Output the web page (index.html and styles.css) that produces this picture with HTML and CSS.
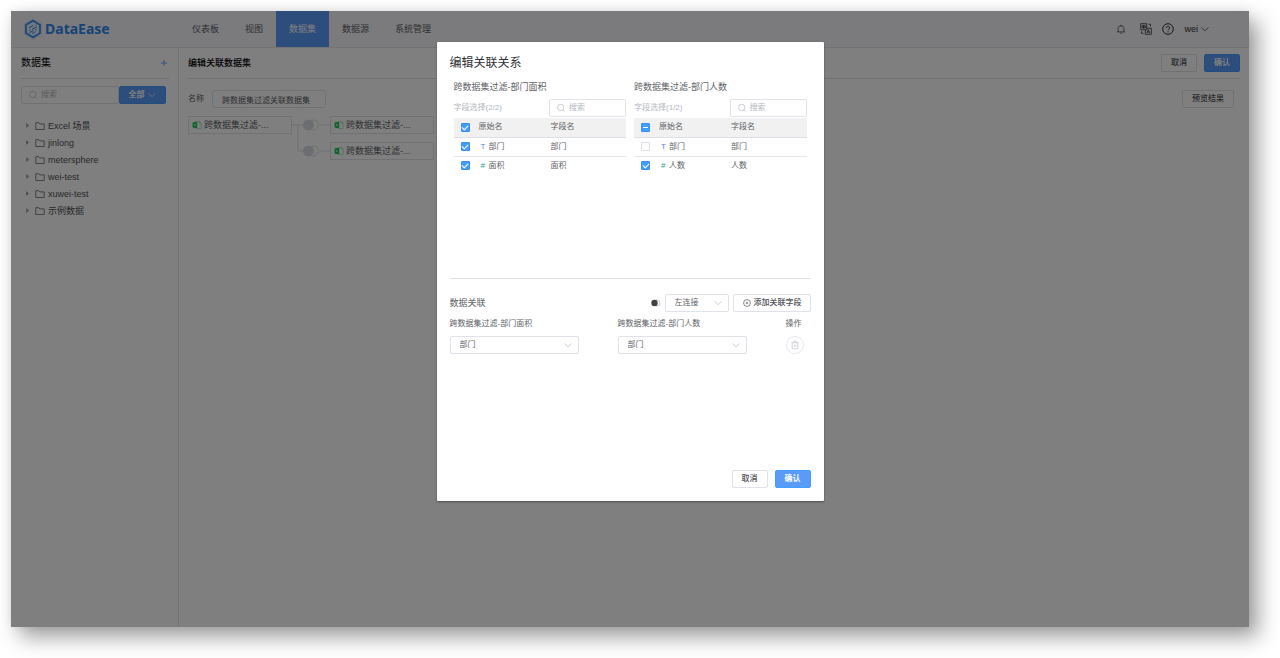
FILE: index.html
```html
<!DOCTYPE html>
<html lang="zh-CN">
<head>
<meta charset="utf-8">
<title>DataEase</title>
<link rel="stylesheet" href="styles.css">
</head>
<body>
<svg class="sprite" aria-hidden="true">
  <symbol id="search" viewBox="0 0 10 10"><circle cx="4.7" cy="4.5" r="3.2"/><path d="M7 6.9 8.6 8.5"/></symbol>
  <symbol id="down" viewBox="0 0 10 10"><path d="M1.5 3.3 5 6.8 8.500 3.3"/></symbol>
  <symbol id="folder" viewBox="0 0 10 10"><path d="M.8 1.700h3l1 1.200h4.400v5.600H.8z"/></symbol>
  <symbol id="caret" viewBox="0 0 10 10"><path d="M2 0 8.500 5 2 10z"/></symbol>
  <symbol id="excel" viewBox="0 0 10 10"><path class="excel-back" d="M5 1.500h2.500L9.200 3v5.500H5M7.300 1.200V3.200h2"/><path class="excel-front" d="M.6 2.400 5.200 1.500v7L.6 7.600z"/><path class="excel-mark" d="m2.200 3.800 1.500 2.400M3.700 3.800 2.200 6.200"/></symbol>
</svg>
<div class="app">
  <header class="topbar">
    <a class="brand" href="#">
      <svg class="brand-icon" viewBox="0 0 20 22"><path class="brand-halo" d="M10 .5 19 5.700v10.600L10 21.500 1 16.300V5.700z"/><path class="brand-hex" d="M10 2.800 17 6.900v8.200L10 19.200 3 15.100V6.900z"/><path class="brand-lines" d="m6 9.800 4.300-2.300M12.500 7.300l1.200-.6M6 12.600l1.500-.8M9 11.400l4.800-2.600M6.500 14.700l4-2.100M12.300 12l1.400-.8M9 15.600l3.500-1.900"/></svg>
      <span>DataEase</span>
    </a>
    <nav class="tabs">
      <a href="#">仪表板</a><a href="#">视图</a><a class="active" href="#">数据集</a><a href="#">数据源</a><a href="#">系统管理</a>
    </nav>
    <div class="tools">
      <svg class="tool bell" viewBox="0 0 12 12"><path d="M2.500 9.500V4.500L4 2.500h4l1.500 2v5M1.200 9.500h9.600M6 1v1.500M5 11h2"/></svg>
      <svg class="tool" viewBox="0 0 12 12"><path d="M.7.700h6v6h-6zM3.700 1.800v4M2 2.800h3.400v1.700H2zM6.700 5.300h4.600v6h-6V6.700M7 10l1.300-3.300L9.600 10M7.500 9h1.700M8.500 1.200h2V3.500M1.500 8.300v2h2"/></svg>
      <svg class="tool help" viewBox="0 0 12 12"><circle cx="6" cy="6" r="5.300"/><path d="M4.400 4.800a1.600 1.600 0 1 1 2.400 1.400Q6 6.600 6 7.300M6 8.300v1"/></svg>
      <button class="user" type="button">wei <svg class="icon"><use href="#down"/></svg></button>
    </div>
  </header>
  <div class="body">
    <aside class="sidebar">
      <div class="side-head"><h2>数据集</h2><button class="plus" type="button" aria-label="新增"><svg viewBox="0 0 8 8"><path d="M4 1v6M1 4h6"/></svg></button></div>
      <div class="side-filter">
        <label class="search"><svg class="icon"><use href="#search"/></svg><input type="text" placeholder="搜索" aria-label="搜索"></label>
        <button class="btn primary all" type="button">全部 <svg class="icon"><use href="#down"/></svg></button>
      </div>
      <ul class="tree">
        <li><svg class="caret"><use href="#caret"/></svg><svg class="folder"><use href="#folder"/></svg>Excel 场景</li>
        <li><svg class="caret"><use href="#caret"/></svg><svg class="folder"><use href="#folder"/></svg>jinlong</li>
        <li><svg class="caret"><use href="#caret"/></svg><svg class="folder"><use href="#folder"/></svg>metersphere</li>
        <li><svg class="caret"><use href="#caret"/></svg><svg class="folder"><use href="#folder"/></svg>wei-test</li>
        <li><svg class="caret"><use href="#caret"/></svg><svg class="folder"><use href="#folder"/></svg>xuwei-test</li>
        <li><svg class="caret"><use href="#caret"/></svg><svg class="folder"><use href="#folder"/></svg>示例数据</li>
      </ul>
    </aside>
    <main class="main">
      <div class="main-head"><h1>编辑关联数据集</h1><div class="actions"><button class="btn" type="button">取消</button><button class="btn primary" type="button">确认</button></div></div>
      <div class="name-row">
        <label for="name">名称</label><input id="name" type="text" value="跨数据集过滤关联数据集">
        <button class="btn preview" type="button">预览结果</button>
      </div>
      <div class="graph">
        <div class="node"><svg class="icon excel"><use href="#excel"/></svg>跨数据集过滤-...</div>
        <svg class="links" viewBox="0 0 38 44"><path d="M0 9h12M28 9h10M6 9v26h6M28 35h10"/><circle class="ring" cx="21.500" cy="9" r="5"/><circle class="ring" cx="21.500" cy="35" r="5"/><circle class="dot" cx="16.500" cy="9" r="5.500"/><circle class="dot" cx="16.500" cy="35" r="5.500"/></svg>
        <div class="children">
          <div class="node"><svg class="icon excel"><use href="#excel"/></svg>跨数据集过滤-...</div>
          <div class="node"><svg class="icon excel"><use href="#excel"/></svg>跨数据集过滤-...</div>
        </div>
      </div>
    </main>
  </div>
  <div class="overlay">
    <section class="dialog" role="dialog" aria-labelledby="dialog-title">
      <h2 id="dialog-title">编辑关联关系</h2>
      <div class="fields">
        <div class="field-panel">
          <h3>跨数据集过滤-部门面积</h3>
          <div class="field-bar"><span>字段选择(2/2)</span><label class="search"><svg class="icon"><use href="#search"/></svg><input type="text" placeholder="搜索" aria-label="搜索字段"></label></div>
          <table>
            <thead><tr><th class="pick"><input type="checkbox" checked aria-label="全选"></th><th class="origin">原始名</th><th>字段名</th></tr></thead>
            <tbody>
              <tr><td class="pick"><input type="checkbox" checked aria-label="部门"></td><td><span class="type text">T</span>部门</td><td>部门</td></tr>
              <tr><td class="pick"><input type="checkbox" checked aria-label="面积"></td><td><span class="type number">#</span>面积</td><td>面积</td></tr>
            </tbody>
          </table>
        </div>
        <div class="field-panel">
          <h3>跨数据集过滤-部门人数</h3>
          <div class="field-bar"><span>字段选择(1/2)</span><label class="search"><svg class="icon"><use href="#search"/></svg><input type="text" placeholder="搜索" aria-label="搜索字段"></label></div>
          <table>
            <thead><tr><th class="pick"><input class="partial" type="checkbox" aria-label="全选"></th><th class="origin">原始名</th><th>字段名</th></tr></thead>
            <tbody>
              <tr><td class="pick"><input type="checkbox" aria-label="部门"></td><td><span class="type text">T</span>部门</td><td>部门</td></tr>
              <tr><td class="pick"><input type="checkbox" checked aria-label="人数"></td><td><span class="type number">#</span>人数</td><td>人数</td></tr>
            </tbody>
          </table>
        </div>
      </div>
      <div class="join-head">
        <h3>数据关联</h3>
        <svg class="join-icon" viewBox="0 0 10 8"><circle class="join-right" cx="6" cy="4" r="3"/><circle class="join-left" cx="3.500" cy="4" r="3.200"/></svg>
        <div class="select join-type"><select aria-label="连接方式"><option>左连接</option></select><svg class="icon"><use href="#down"/></svg></div>
        <button class="btn add" type="button"><svg class="icon" viewBox="0 0 10 10"><circle cx="5" cy="5" r="3.400"/><path d="M5 3.800v2.400M3.800 5h2.400"/></svg>添加关联字段</button>
      </div>
      <div class="join-grid">
        <label for="left-field">跨数据集过滤-部门面积</label><label for="right-field">跨数据集过滤-部门人数</label><span>操作</span>
        <div class="select"><select id="left-field"><option>部门</option></select><svg class="icon"><use href="#down"/></svg></div>
        <div class="select"><select id="right-field"><option>部门</option></select><svg class="icon"><use href="#down"/></svg></div>
        <button class="trash" type="button" aria-label="删除" disabled><svg class="icon" viewBox="0 0 10 10"><path d="M1.300 2.700h7.400M3.700 2.500V1.300h2.600v1.200M2.200 2.700v6h5.600v-6M4.200 4.500v2.500M5.800 4.500v2.500"/></svg></button>
      </div>
      <div class="dialog-foot"><button class="btn" type="button">取消</button><button class="btn primary" type="button">确认</button></div>
    </section>
  </div>
</div>
</body>
</html>
```
FILE: styles.css
```css
* { box-sizing: border-box; }
body {
  margin: 0;
  min-height: 100vh;
  padding: 11px 31px 31px 11px;
  display: flex;
  background: #fff;
  color: #606266;
  font: 8px/12px "Liberation Sans", "Noto Sans CJK SC", sans-serif;
}
h1, h2, h3, ul { margin: 0; padding: 0; font-weight: 400; list-style: none; }
a { color: inherit; text-decoration: none; }
button, input, select { font: inherit; color: inherit; margin: 0; }
svg { fill: none; stroke: currentColor; flex: none; }
.sprite { display: none; }
.icon { width: 10px; height: 10px; stroke-width: 0.7; }

.app {
  position: relative;
  flex: 1;
  display: flex;
  flex-direction: column;
  background: #fff;
  box-shadow: 9px 10px 20px rgba(0, 0, 0, 0.38), 0 0 10px rgba(0, 0, 0, 0.08);
}
.topbar {
  display: flex;
  height: 37px;
  background: #f6f6fb;
  border-bottom: 1px solid #e6e6e6;
}
.brand {
  width: 168px;
  padding-left: 12px;
  display: flex;
  align-items: center;
  gap: 2px;
  color: #2f86f2;
  font: 700 14px/20px "Noto Sans", sans-serif;
}
.brand-icon { width: 20px; height: 22px; }
.brand-halo { fill: #cfe0f7; stroke: none; }
.brand-hex { fill: #e9f1fc; stroke-width: 1.6; }
.brand-lines { stroke-width: 1; }
.tabs { display: flex; font-size: 9px; }
.tabs a { display: flex; align-items: center; padding: 0 13px; }
.tabs .active { background: #5b9bf8; color: #fff; }
.tools { margin-left: auto; padding-right: 39px; display: flex; align-items: center; gap: 10px; color: #303133; }
.tool { width: 12px; height: 12px; stroke-width: 0.8; }
.bell { width: 10px; height: 10px; margin-right: 4px; }
.help { stroke-width: 1; }
.user { display: flex; align-items: center; gap: 2px; padding: 0; border: 0; background: none; font-size: 9px; }

.body { flex: 1; display: flex; }
.sidebar { width: 168px; padding: 0 9px 0 10px; border-right: 1px solid #e6e6e6; }
.side-head { height: 31px; display: flex; align-items: center; justify-content: space-between; border-bottom: 1px solid #dedede; color: #000; }
.side-head h2 { font-size: 10px; }
.plus { padding: 0 1px 0 0; border: 0; background: none; color: #4c9bfb; }
.plus svg { display: block; width: 8px; height: 8px; stroke-width: 0.8; }
.side-filter { display: flex; margin: 7px 3px 0 0; }
.search { display: flex; align-items: center; gap: 3px; height: 18px; padding: 0 6px; border: 1px solid #e0e3e9; border-radius: 2px; color: #b4b8c0; }
.search input { min-width: 0; width: 100%; padding: 0; border: 0; background: none; outline: 0; }
.search input::placeholder { color: #b4b8c0; }
.side-filter .search { flex: 1; }
.all { width: 47px; gap: 2px; }
.tree { padding: 13px 0 0 4px; font-size: 9px; }
.tree li { display: flex; align-items: center; height: 17px; gap: 3px; color: #505256; }
.caret { width: 5px; height: 5px; fill: #a4a8b0; stroke: none; }
.folder { width: 10px; height: 10px; stroke-width: 0.7; margin-left: 2px; }

.btn {
  display: inline-flex;
  align-items: center;
  justify-content: center;
  min-width: 36px;
  height: 18px;
  padding: 0 9px;
  border: 1px solid #dfe2e8;
  border-radius: 2px;
  background: #fff;
  color: #505256;
  font-weight: 500;
  white-space: nowrap;
}
.primary { background: #5b9bf8; border-color: #409eff; color: #fff; font-weight: 700; }
.main { flex: 1; padding: 0 9px; }
.main-head { height: 31px; display: flex; align-items: center; justify-content: space-between; border-bottom: 1px solid #dedede; }
.main-head h1 { font-size: 9px; font-weight: 500; color: #000; }
.actions { display: flex; gap: 7px; }
.name-row { display: flex; align-items: center; gap: 8px; padding: 11px 6px 0 0; }
.name-row input { width: 114px; height: 18px; padding: 0 9px; border: 1px solid #dfe2e8; border-radius: 3px; background: none; }
.preview { margin-left: auto; }
.graph { display: flex; align-items: flex-start; margin-top: 8px; }
.node { display: flex; align-items: center; gap: 2px; width: 104px; height: 18px; padding-left: 3px; border: 1px solid #dfe2e8; font-size: 9px; }
.children { display: grid; gap: 8px; }
.links { width: 38px; height: 44px; stroke: #dcdfe6; }
.dot { fill: #d9dbe3; stroke: none; }
.excel-back { stroke: #9be0b4; }
.excel-front { fill: #16c750; stroke: none; }
.excel-mark { stroke: #d5f5df; }

.overlay {
  position: absolute;
  inset: 0;
  display: flex;
  justify-content: center;
  align-items: flex-start;
  padding-top: 31px;
  background: rgba(0, 0, 0, 0.5);
}
.dialog {
  width: 387px;
  min-height: 459px;
  padding: 13px;
  display: flex;
  flex-direction: column;
  background: #fff;
  border-radius: 1px;
  box-shadow: 0 1px 2px rgba(0, 0, 0, 0.4);
}
.dialog > h2 { font-size: 12px; line-height: 16px; color: #303133; }
.dialog h3 { font-size: 9px; line-height: 14px; }
.fields { display: grid; grid-template-columns: 1fr 1fr; gap: 8px; min-height: 208px; padding: 9px 4px 0; border-bottom: 1px solid #e0e0e0; }
.field-bar { display: flex; align-items: center; justify-content: space-between; margin-top: 5px; color: #b4b8c0; }
.field-bar .search { width: 77px; }
table { width: 100%; margin-top: 1px; border-collapse: collapse; table-layout: fixed; }
th, td { height: 19px; padding: 0; border-bottom: 1px solid #e4e7ed; text-align: left; font-weight: 400; line-height: 12px; }
th { background: #f1f1f1; border-bottom-color: #dcdfe6; }
tbody tr:last-child td { border-bottom: 0; }
.pick { width: 25px; padding-left: 7px; }
.origin { width: 72px; }
.type { display: inline-block; width: 10px; padding-left: 2px; }
.type.text { color: #5b7fe8; }
.type.number { color: #2f9c80; }
input[type="checkbox"] {
  appearance: none;
  display: grid;
  place-items: center;
  width: 9px;
  height: 9px;
  border: 1px solid #dcdfe6;
  border-radius: 1px;
  background: #fff;
}
input[type="checkbox"]:checked, input[type="checkbox"].partial { background: #409eff; border-color: #3b8cf5; }
input[type="checkbox"]:checked::before { content: ""; width: 5px; height: 3px; margin-bottom: 1px; border: solid #fff; border-width: 0 0 1px 1px; transform: rotate(-45deg); }
input.partial::before { content: ""; width: 5px; height: 1px; background: #fff; }

.join-head { display: flex; align-items: center; margin-top: 15px; gap: 4px; }
.join-head h3 { margin-right: auto; }
.join-icon { width: 10px; height: 8px; }
.join-right { stroke: #b4b8c0; stroke-width: 0.8; }
.join-left { fill: #404246; stroke: none; }
.select { position: relative; height: 18px; }
.select select { display: block; appearance: none; width: 100%; height: 18px; padding: 0 18px 0 9px; border: 1px solid #dfe2e8; border-radius: 2px; background: #fff; }
.select .icon { position: absolute; right: 6px; top: 4px; color: #b4b8c0; pointer-events: none; }
.join-type { width: 64px; }
.add { gap: 2px; padding: 0 8px; }
.join-grid { display: grid; grid-template-columns: 129px 129px auto; column-gap: 39px; row-gap: 6px; margin-top: 6px; }
.trash { width: 18px; height: 18px; padding: 0; display: grid; place-items: center; border: 1px solid #e4e7ed; border-radius: 50%; background: #fff; color: #c0c4cc; }
.dialog-foot { display: flex; justify-content: flex-end; gap: 7px; margin-top: auto; }
```
